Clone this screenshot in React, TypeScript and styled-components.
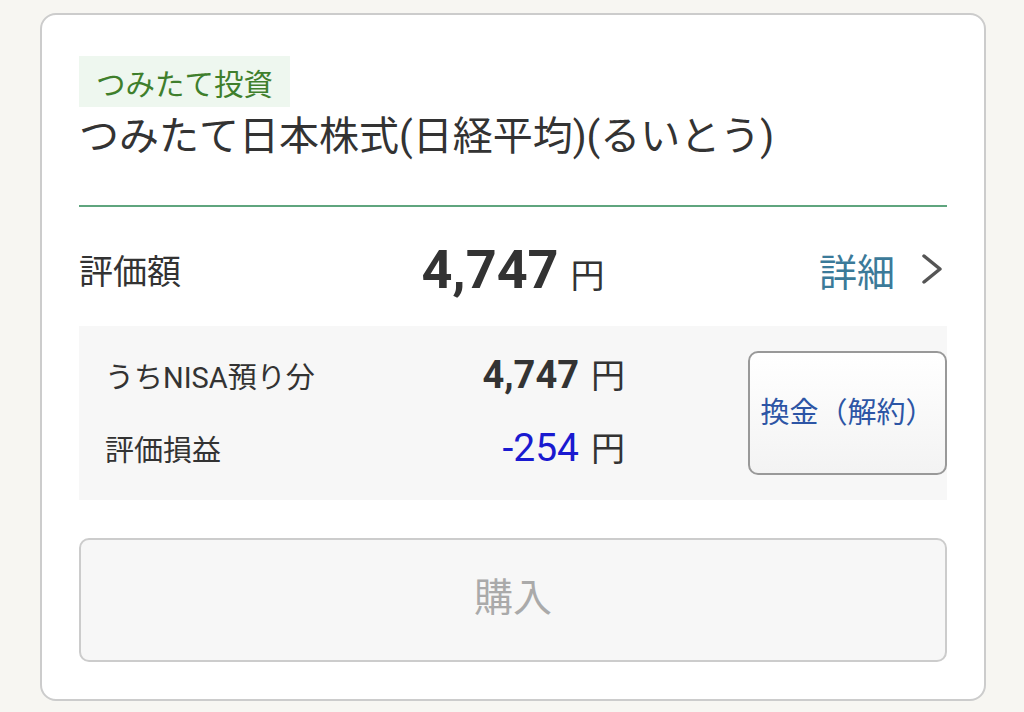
import React from 'react';
import styled, { createGlobalStyle } from 'styled-components';

const GlobalStyle = createGlobalStyle`
  html, body {
    margin: 0;
    padding: 0;
    background: #f7f6f2;
  }
  body {
    font-family: Roboto, "Noto Sans CJK JP", sans-serif;
    color: #333333;
  }
`;

const Page = styled.div`
  padding: 13px 38px 12px 40px;
`;

const Card = styled.div`
  background: #ffffff;
  border: 2px solid #cccccc;
  border-radius: 16px;
  padding: 41px 37px 37px 37px;
`;

const Badge = styled.div`
  display: inline-flex;
  align-items: center;
  height: 51px;
  padding: 0 17px;
  background: #eef7ef;
  color: #3f7f2c;
  font-size: 29.5px;
`;

const Title = styled.h1`
  margin: 0;
  padding: 6px 0 44px;
  font-size: 40px;
  font-weight: 400;
  line-height: 48px;
  color: #333333;
  border-bottom: 2px solid #5fa57e;
`;

const ValueRow = styled.div`
  display: grid;
  grid-template-columns: 1fr auto 1fr;
  align-items: center;
  height: 119px;
  padding-top: 5px;
  box-sizing: border-box;
`;

const Label = styled.span<{ size?: number }>`
  font-size: ${(p) => p.size ?? 34}px;
  color: #333333;
`;

const Amount = styled.span<{ size: number; bold?: boolean; color?: string }>`
  font-size: ${(p) => p.size}px;
  font-weight: ${(p) => (p.bold ? 700 : 400)};
  color: ${(p) => p.color ?? '#333333'};
`;

const Yen = styled.span<{ size: number }>`
  font-size: ${(p) => p.size}px;
  margin-left: 12px;
  color: #333333;
`;

const DetailLink = styled.a`
  justify-self: end;
  display: flex;
  align-items: center;
  gap: 25px;
  margin-right: 3px;
  color: #3b7a99;
  font-size: 38px;
  text-decoration: none;
`;

const Panel = styled.div`
  display: flex;
  align-items: center;
  height: 174px;
  box-sizing: border-box;
  background: #f7f7f7;
  padding-left: 26px;
`;

const PanelRows = styled.div`
  width: 520px;
  display: flex;
  flex-direction: column;
  gap: 28px;
  padding-bottom: 10px;
`;

const PanelRow = styled.div`
  display: flex;
  justify-content: space-between;
  align-items: baseline;
  height: 45px;
`;

const CashButton = styled.button`
  margin-left: auto;
  width: 199px;
  height: 124px;
  border: 2px solid #999999;
  border-radius: 10px;
  background: linear-gradient(#ffffff, #f3f3f3);
  color: #2d55a5;
  font-family: inherit;
  font-size: 29px;
  padding: 0 0 6px;
  white-space: nowrap;
`;

const BuyButton = styled.button`
  display: block;
  width: 100%;
  height: 124px;
  margin-top: 38px;
  padding: 0 0 12px;
  border: 2px solid #cccccc;
  border-radius: 10px;
  background: #f7f7f7;
  color: #aaaaaa;
  font-family: inherit;
  font-size: 39px;
`;

function Chevron() {
  return (
    <svg width="24" height="34" viewBox="0 0 24 34" fill="none">
      <path d="M4 4 L20 17 L4 30" stroke="#555555" strokeWidth="3.5" strokeLinecap="round" strokeLinejoin="round" />
    </svg>
  );
}

export default function App() {
  return (
    <>
      <GlobalStyle />
      <Page>
        <Card>
          <Badge>つみたて投資</Badge>
          <Title>つみたて日本株式(日経平均)(るいとう)</Title>
          <ValueRow>
            <Label>評価額</Label>
            <div>
              <Amount size={54} bold>4,747</Amount>
              <Yen size={34}>円</Yen>
            </div>
            <DetailLink href="#">
              詳細
              <Chevron />
            </DetailLink>
          </ValueRow>
          <Panel>
            <PanelRows>
              <PanelRow>
                <Label size={29}>うちNISA預り分</Label>
                <div>
                  <Amount size={38} bold>4,747</Amount>
                  <Yen size={34}>円</Yen>
                </div>
              </PanelRow>
              <PanelRow>
                <Label size={29}>評価損益</Label>
                <div>
                  <Amount size={39} color="#1a1ad0">-254</Amount>
                  <Yen size={34}>円</Yen>
                </div>
              </PanelRow>
            </PanelRows>
            <CashButton>換金（解約）</CashButton>
          </Panel>
          <BuyButton disabled>購入</BuyButton>
        </Card>
      </Page>
    </>
  );
}
